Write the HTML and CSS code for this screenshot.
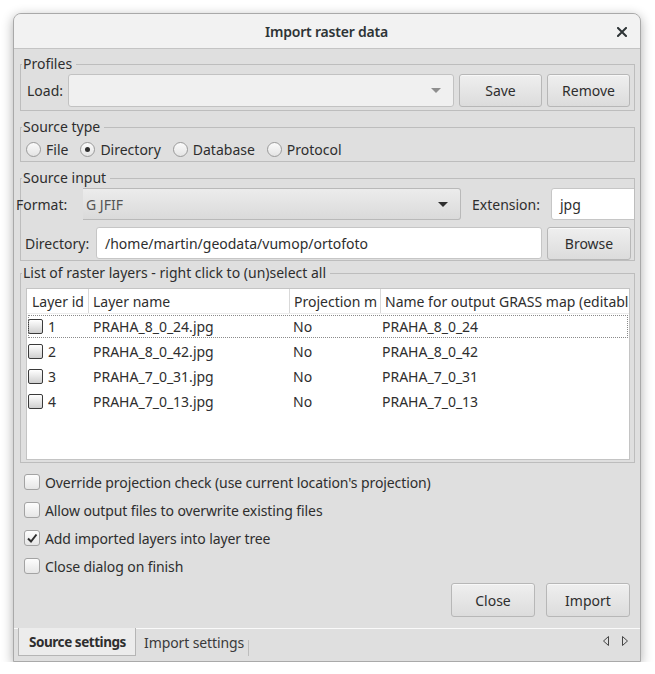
FILE: index.html
```html
<!DOCTYPE html>
<html>
<head>
<meta charset="utf-8">
<link rel="stylesheet" href="styles.css">
</head>
<body>
<div class="window">
  <div class="titlebar">
    <span></span>
    <span class="title">Import raster data</span>
    <span class="close"><svg width="10" height="10" viewBox="0 0 10 10"><path d="M1 1L9 9M9 1L1 9" stroke="#2e3436" stroke-width="2" stroke-linecap="square"/></svg></span>
  </div>
  <div class="page">
    <fieldset class="group profiles">
      <legend>Profiles</legend>
      <div class="row">
        <span class="lbl load-lbl">Load:</span>
        <div class="combo flat load-combo"><span class="val"></span><span class="arrow light"></span></div>
        <button class="btn pbtn">Save</button>
        <button class="btn pbtn">Remove</button>
      </div>
    </fieldset>

    <fieldset class="group stype">
      <legend>Source type</legend>
      <div class="radios">
        <label class="radio"><span class="rb"></span>File</label>
        <label class="radio"><span class="rb on"></span>Directory</label>
        <label class="radio"><span class="rb"></span>Database</label>
        <label class="radio"><span class="rb"></span>Protocol</label>
      </div>
    </fieldset>

    <fieldset class="group sinput">
      <legend>Source input</legend>
      <div class="scroll">
        <div class="row fmt-row">
          <span class="lbl fmt-lbl">Format:</span>
          <div class="combo raised fmt-combo"><span class="val">G JFIF</span><span class="arrow dark"></span></div>
          <span class="lbl ext-lbl">Extension:</span>
          <div class="input ext-input">jpg</div>
        </div>
        <div class="row dir-row">
          <span class="lbl dir-lbl">Directory:</span>
          <div class="input dir-input">/home/martin/geodata/vumop/ortofoto</div>
          <button class="btn browse">Browse</button>
        </div>
      </div>
    </fieldset>

    <fieldset class="group layers">
      <legend>List of raster layers - right click to (un)select all</legend>
      <div class="list">
        <div class="lrow head">
          <div class="c c1">Layer id</div>
          <div class="c c2">Layer name</div>
          <div class="c c3">Projection m</div>
          <div class="c c4">Name for output GRASS map (editabl</div>
        </div>
        <div class="lrow item focus">
          <div class="c c1"><span class="cb"></span>1</div>
          <div class="c c2">PRAHA_8_0_24.jpg</div>
          <div class="c c3">No</div>
          <div class="c c4">PRAHA_8_0_24</div>
        </div>
        <div class="lrow item">
          <div class="c c1"><span class="cb"></span>2</div>
          <div class="c c2">PRAHA_8_0_42.jpg</div>
          <div class="c c3">No</div>
          <div class="c c4">PRAHA_8_0_42</div>
        </div>
        <div class="lrow item">
          <div class="c c1"><span class="cb"></span>3</div>
          <div class="c c2">PRAHA_7_0_31.jpg</div>
          <div class="c c3">No</div>
          <div class="c c4">PRAHA_7_0_31</div>
        </div>
        <div class="lrow item">
          <div class="c c1"><span class="cb"></span>4</div>
          <div class="c c2">PRAHA_7_0_13.jpg</div>
          <div class="c c3">No</div>
          <div class="c c4">PRAHA_7_0_13</div>
        </div>
      </div>
    </fieldset>

    <div class="checks">
      <label class="check"><span class="box"></span>Override projection check (use current location's projection)</label>
      <label class="check"><span class="box"></span>Allow output files to overwrite existing files</label>
      <label class="check"><span class="box on"><svg width="12" height="12" viewBox="0 0 12 12"><path d="M2 6.5L5 9.5L10.5 2.5" fill="none" stroke="#2e2e2e" stroke-width="2"/></svg></span>Add imported layers into layer tree</label>
      <label class="check"><span class="box"></span>Close dialog on finish</label>
    </div>

    <div class="actions">
      <button class="btn abtn">Close</button>
      <button class="btn abtn">Import</button>
    </div>
  </div>
  <div class="tabbar">
    <div class="tab sel">Source settings</div>
    <div class="tab plain">Import settings</div>
    <div class="tabsep"></div>
    <div class="tabspace"></div>
    <div class="scrollers">
      <svg width="8" height="12" viewBox="0 0 8 12"><path d="M6.5 1.5L1.5 6L6.5 10.5Z" fill="none" stroke="#444" stroke-width="1"/></svg>
      <svg width="8" height="12" viewBox="0 0 8 12"><path d="M1.5 1.5L6.5 6L1.5 10.5Z" fill="none" stroke="#444" stroke-width="1"/></svg>
    </div>
  </div>
</div>
</body>
</html>
```

FILE: styles.css
```css
* { box-sizing: border-box; }

body {
  margin: 0;
  background: #ffffff;
  font-family: "Noto Sans", "DejaVu Sans", sans-serif;
  font-size: 14px;
  color: #2e2e2e;
}

.window {
  margin: 13px 0 0 13px;
  width: 628px;
  height: 649px;
  border: 1px solid #a9a9a9;
  border-radius: 8px 8px 0 0;
  box-shadow: 0 3px 12px rgba(0, 0, 0, 0.32);
  background: #dfdfdf;
  display: flex;
  flex-direction: column;
  overflow: hidden;
}

.titlebar {
  flex: none;
  height: 35px;
  background: #f2f2f2;
  border-bottom: 1px solid #c4c4c4;
  display: grid;
  grid-template-columns: 1fr auto 1fr;
  align-items: center;
  padding: 0 13px 0 12px;
}
.title {
  font-weight: 600;
  color: #2e3436;
  font-size: 14px;
  letter-spacing: -0.2px;
}
.close {
  justify-self: end;
  display: flex;
  padding-top: 1px;
}

.page {
  flex: 1;
  padding: 5px 5px 0 6px;
  display: flex;
  flex-direction: column;
}

fieldset.group {
  margin: 0;
  padding: 0;
  min-width: 0;
  border: 1px solid #bdbdbd;
}
fieldset.group legend {
  margin-left: 1px;
  padding: 0 4px 0 1px;
  line-height: 20px;
  font-size: 14px;
}

.row {
  display: flex;
  align-items: center;
}

.btn {
  font-family: inherit;
  font-size: 14px;
  color: #2e2e2e;
  background: linear-gradient(#efefef, #dcdcdc);
  border: 1px solid #b7b7b7;
  border-radius: 3px;
  padding: 0;
  height: 33px;
  box-shadow: inset 0 1px 0 #f8f8f8;
}

/* Profiles */
.profiles .row {
  padding: 0 4px 3px 6px;
}
.load-lbl {
  width: 41px;
  flex: none;
}
.combo {
  height: 33px;
  display: flex;
  align-items: center;
  border-radius: 3px;
}
.combo .val {
  flex: 1;
}
.load-combo {
  width: 386px;
  background: #f0f0f0;
  border: 1px solid #c2c2c2;
  padding-right: 12px;
}
.arrow {
  width: 0;
  height: 0;
  border-left: 5px solid transparent;
  border-right: 5px solid transparent;
}
.arrow.light {
  border-top: 5px solid #8e8e8e;
}
.arrow.dark {
  border-top: 5px solid #2e2e2e;
}
.pbtn {
  width: 83px;
  margin-left: 5px;
}

/* Source type */
.stype {
  margin-top: 6px !important;
}
.radios {
  display: flex;
  align-items: center;
  height: 24px;
  padding-left: 5px;
}
.radio {
  display: flex;
  align-items: center;
  margin-right: 12px;
}
.rb {
  width: 15px;
  height: 15px;
  border-radius: 50%;
  border: 1px solid #9a9a9a;
  background: linear-gradient(#fbfbfb, #e4e4e4);
  margin-right: 5px;
  display: flex;
  align-items: center;
  justify-content: center;
}
.rb.on::after {
  content: "";
  width: 5px;
  height: 5px;
  border-radius: 50%;
  background: #2e2e2e;
}

/* Source input */
.sinput {
  margin-top: 6px !important;
}
.scroll {
  margin-left: -5px;
  height: 72px;
  overflow: hidden;
}
.fmt-row {
  height: 32px;
}
.fmt-lbl {
  width: 67px;
  flex: none;
}
.fmt-combo {
  width: 378px;
  flex: none;
  height: 32px;
  background: linear-gradient(#ececec, #dadada);
  border: 1px solid #b9b9b9;
  border-left: none;
  border-radius: 0 3px 3px 0;
  padding: 0 12px 0 3px;
  color: #555;
}
.ext-lbl {
  margin-left: 11px;
  width: 79px;
  flex: none;
}
.input {
  background: #ffffff;
  border: 1px solid #c6c6c6;
  border-radius: 3px;
  height: 32px;
  display: flex;
  align-items: center;
  padding-left: 8px;
  flex: none;
}
.ext-input {
  width: 95px;
}
.dir-row {
  margin-top: 7px;
  height: 32px;
  padding-left: 9px;
}
.dir-lbl {
  width: 71px;
  flex: none;
}
.dir-input {
  width: 446px;
}
.browse {
  width: 84px;
  margin-left: 5px;
  flex: none;
  height: 33px;
  margin-top: 1px;
}

/* Layers list */
.layers {
  margin-top: 2px !important;
}
.list {
  margin: 5px 4px 2px 5px;
  height: 172px;
  background: #ffffff;
  border: 1px solid #c4c4c4;
  overflow: hidden;
}
.lrow {
  display: grid;
  grid-template-columns: 62px 201px 91px 1fr;
  height: 25px;
  align-items: center;
  white-space: nowrap;
}
.lrow .c {
  overflow: hidden;
  height: 100%;
  display: flex;
  align-items: center;
}
.head {
  border-bottom: 1px solid #ececec;
}
.head .c {
  border-right: 1px solid #d9d9d9;
  padding-left: 4px;
}
.head .c4 {
  border-right: none;
}
.head .c1 {
  padding-left: 5px;
}
.item .c1 {
  padding-left: 1px;
}
.item .c2 {
  padding-left: 4px;
}
.item .c3 {
  padding-left: 3px;
}
.item .c4 {
  padding-left: 1px;
}
.item.focus {
  outline: 1px dotted #8a8a8a;
  outline-offset: -2px;
}
.cb {
  width: 15px;
  height: 15px;
  border: 1px solid #3a3a3a;
  border-radius: 2px;
  background: linear-gradient(#ffffff, #cfcfcf);
  margin-right: 5px;
  flex: none;
}

/* Checks */
.checks {
  margin-top: 5px;
  padding-left: 4px;
  letter-spacing: -0.1px;
}
.check {
  display: flex;
  align-items: center;
  height: 28px;
}
.box {
  width: 16px;
  height: 16px;
  border: 1px solid #a3a3a3;
  border-radius: 3px;
  background: linear-gradient(#fdfdfd, #e6e6e6);
  margin-right: 5px;
  display: flex;
  align-items: center;
  justify-content: center;
  flex: none;
}

/* Actions */
.actions {
  margin-top: 3px;
  display: flex;
  justify-content: flex-end;
  padding-right: 5px;
}
.abtn {
  width: 84px;
  height: 34px;
  margin-left: 11px;
}

/* Tabs */
.tabbar {
  flex: none;
  height: 33px;
  border-top: 1px solid #fafafa;
  display: flex;
  align-items: flex-start;
  padding-left: 4px;
}
.tab {
  height: 27px;
  display: flex;
  align-items: center;
  white-space: nowrap;
  color: #3a3a3a;
}
.tab.sel {
  margin-top: -1px;
  height: 28px;
  width: 118px;
  padding-left: 10px;
  background: #ececec;
  border: 1px solid #b5b5b5;
  border-top: none;
  font-weight: 700;
  font-size: 13.5px;
  letter-spacing: -0.45px;
  color: #2e2e2e;
}
.tab.plain {
  padding: 0 4px 0 8px;
  letter-spacing: -0.1px;
}
.tabsep {
  width: 1px;
  height: 16px;
  margin-top: 11px;
  background: #bdbdbd;
}
.tabspace {
  flex: 1;
}
.scrollers {
  display: flex;
  gap: 11px;
  padding: 6px 11px 0 0;
}
```
